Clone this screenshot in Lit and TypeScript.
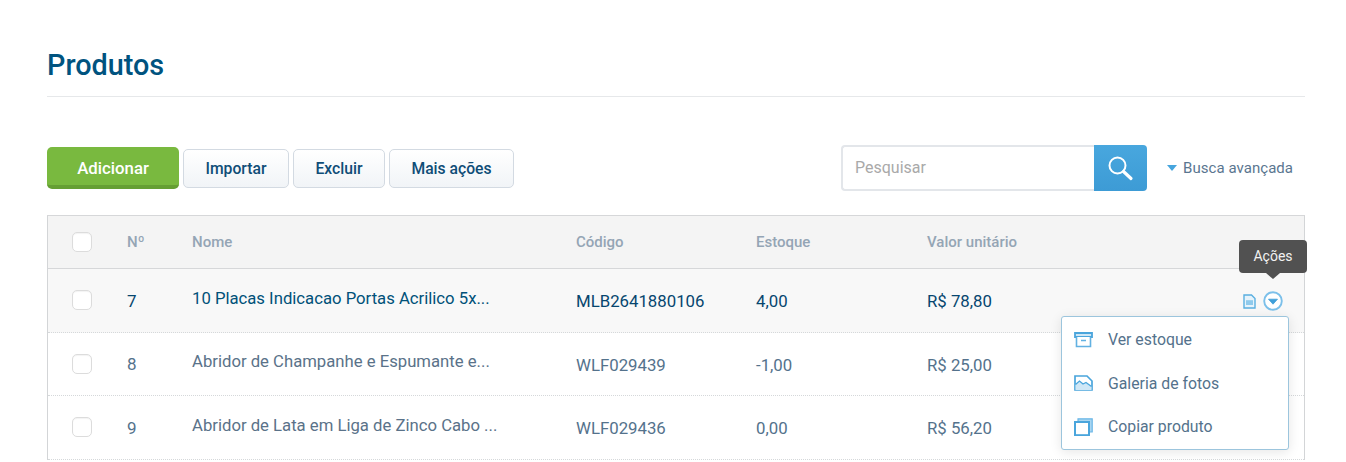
import { LitElement, html, css, svg } from "lit";
import { customElement } from "lit/decorators.js";

const rows = [
  { n: "7", nome: "10 Placas Indicacao Portas Acrilico 5x...", cod: "MLB2641880106", est: "4,00", val: "R$ 78,80", active: true },
  { n: "8", nome: "Abridor de Champanhe e Espumante e...", cod: "WLF029439", est: "-1,00", val: "R$ 25,00", active: false },
  { n: "9", nome: "Abridor de Lata em Liga de Zinco Cabo ...", cod: "WLF029436", est: "0,00", val: "R$ 56,20", active: false },
];

const boxIcon = svg`<svg width="19" height="16" viewBox="0 0 19 16"><path d="M1 1h17v4H1z" fill="#cfe7f6" stroke="#4aa5dc" stroke-width="1.8"/><path d="M2.500 5v9.500h14V5M7 8.500h5" fill="#fff" stroke="#62b1e2" stroke-width="1.600"/></svg>`;
const picIcon = svg`<svg width="19" height="16" viewBox="0 0 19 16"><path d="M1 1h12l5 5v9H1z" fill="#fff" stroke="#4aa5dc" stroke-width="1.700"/><path d="M1.500 9.500l4-3.500 3.500 3 3-1.500 5.500 4v3.500h-16z" fill="#cfe7f6"/><path d="M1.500 9.500l4-3.500 3.500 3 3-1.500 5.500 4" fill="none" stroke="#4aa5dc" stroke-width="1.300"/></svg>`;
const copyIcon = svg`<svg width="19" height="18" viewBox="0 0 19 18"><path d="M4 .8h14.200V14H15V4H4z" fill="#a9d6f1" stroke="#6ab6e6" stroke-width="1.200"/><rect x="1" y="4" width="14" height="13.200" fill="#fff" stroke="#4aa5dc" stroke-width="2"/></svg>`;

@customElement("app-root")
export class AppRoot extends LitElement {
  static styles = css`
    :host { display: block; width: 1346px; height: 462px; overflow: hidden; background: #fff; font-family: Roboto, "Liberation Sans", sans-serif; color: #54728c; }
    .page { padding: 0 41px 0 47px; }
    h1 { margin: 0; height: 97px; box-sizing: border-box; padding-top: 47px; border-bottom: 1px solid #e6e8ea; font-size: 28.8px; line-height: 37px; font-weight: 500; color: #00537f; }
    .toolbar { display: flex; align-items: center; height: 46px; margin-top: 48px; }
    .btn { box-sizing: border-box; height: 39px; margin-right: 4px; display: flex; align-items: center; justify-content: center; border: 1px solid #d3dae2; border-radius: 5px; background: linear-gradient(#fff, #f1f4f7); font-size: 15.7px; font-weight: 500; color: #0f4d77; }
    .add { width: 132px; height: 42px; border: 0; border-bottom: 4px solid #659f33; background: #79b93f; color: #fff; border-radius: 5px; padding-top: 3px; font-size: 16.8px; }
    .imp { width: 106px; } .exc { width: 92px; } .mais { width: 125px; }
    .spacer { flex: 1; }
    .search { display: flex; height: 46px; width: 306px; }
    .field { flex: 1; box-sizing: border-box; border: 2px solid #e3e6ea; border-right: 0; border-radius: 4px 0 0 4px; padding: 0 0 2px 12px; display: flex; align-items: center; font-size: 16px; color: #a9a9a9; }
    .go { width: 53px; border-radius: 0 4px 4px 0; background: linear-gradient(#48a7de, #3d9bd5); display: flex; align-items: center; justify-content: center; }
    .adv { display: flex; align-items: center; width: 158px; height: 46px; box-sizing: border-box; padding: 0 0 0 20px; font-size: 15px; letter-spacing: 0.05px; color: #5a7690; }
    .tri { width: 0; height: 0; border: 5px solid transparent; border-top: 6px solid #46a5dd; border-bottom: 0; margin-right: 6px; }
    .table { position: relative; margin-top: 24px; border: 1px solid #d3d5d7; border-bottom: 0; border-top-color: #d6d7d9; }
    .row, .head { display: grid; grid-template-columns: 79px 65px 384px 180px 171px 1fr; align-items: center; }
    .check { margin-left: 24px; }
    .head { height: 52px; background: #f4f4f4; border-bottom: 1px solid #d6d7d9; font-size: 15px; font-weight: 500; color: #94a5b5; }
    .row { height: 62.500px; border-bottom: 1px dotted #d5d8da; font-size: 16.800px; color: #54728c; }
    .row.active { background: #f8f8f8; color: #06466f; }
    .cell { padding-top: 2px; }
    .nome { font-size: 16.700px; padding-bottom: 4px; color: #5a7289; white-space: nowrap; }
    .row.active .nome { color: #005179; }
    .num { font-size: 17px; padding-top: 1px; }
    .check { box-sizing: border-box; width: 20px; height: 20px; background: #fff; border: 1px solid #dcdcdc; border-radius: 5px; box-shadow: inset 0 1px 1px rgba(0,0,0,0.05); }
    .acts { position: absolute; left: 1195px; top: 75px; display: flex; gap: 7px; align-items: center; }
    .tip { position: absolute; left: 1191px; top: 24px; width: 68px; height: 33px; box-sizing: border-box; padding-bottom: 2px; background: #515151; border-radius: 4px; color: #f2f2f2; font-size: 14px; display: flex; align-items: center; justify-content: center; }
    .tip::after { content: ""; position: absolute; left: 27px; bottom: -6px; border: 7px solid transparent; border-top: 6px solid #515151; border-bottom: 0; }
    .menu { position: absolute; left: 1013px; top: 100px; width: 228px; height: 134px; box-sizing: border-box; background: #fff; border: 1px solid #9cc5dd; border-radius: 3px; box-shadow: 0 2px 12px rgba(0,0,0,0.1); padding: 1px 0 0 12px; }
    .mi { display: flex; align-items: center; height: 43.500px; font-size: 15.800px; color: #54728c; }
    .mi svg { width: 19px; margin-right: 15px; flex: none; }
  `;

  render() {
    return html`
      <div class="page">
        <h1>Produtos</h1>
        <div class="toolbar">
          <div class="btn add">Adicionar</div>
          <div class="btn imp">Importar</div>
          <div class="btn exc">Excluir</div>
          <div class="btn mais">Mais ações</div>
          <div class="spacer"></div>
          <div class="search">
            <div class="field">Pesquisar</div>
            <div class="go">
              <svg width="26" height="26" viewBox="0 0 26 26"><circle cx="9.500" cy="10.500" r="8" fill="none" stroke="#fff" stroke-width="2"/><path d="M15.500 16.500l7.500 7" stroke="#fff" stroke-width="3.200" stroke-linecap="round"/></svg>
            </div>
          </div>
          <div class="adv"><span class="tri"></span>Busca avançada</div>
        </div>
        <div class="table">
          <div class="head">
            <div class="check"></div><div>Nº</div><div>Nome</div><div>Código</div><div>Estoque</div><div>Valor unitário</div>
          </div>
          ${rows.map((r) => html`
            <div class="row ${r.active ? "active" : ""}">
              <div class="check"></div>
              <div class="num">${r.n}</div>
              <div class="nome">${r.nome}</div>
              <div class="cell">${r.cod}</div>
              <div class="cell">${r.est}</div>
              <div class="cell">${r.val}</div>
            </div>`)}
          <div class="acts">
            <svg width="13" height="15" viewBox="0 0 13 15"><path d="M1 1h7.500L12 4.500V14H1z" fill="#e6f3fb" stroke="#5aafe0" stroke-width="1.400"/><path d="M3 6.200h7v4.800H3z" fill="#8fcaec"/></svg>
            <svg width="20" height="20" viewBox="0 0 20 20"><circle cx="10" cy="10" r="8.800" fill="#fff" stroke="#7cc0ea" stroke-width="1.900"/><path d="M5.500 8.200h9l-4.500 5z" fill="#3f9fd9" stroke="#3f9fd9" stroke-width=".8" stroke-linejoin="round"/></svg>
          </div>
          <div class="tip">Ações</div>
          <div class="menu">
            <div class="mi">${boxIcon}Ver estoque</div>
            <div class="mi">${picIcon}Galeria de fotos</div>
            <div class="mi">${copyIcon}Copiar produto</div>
          </div>
        </div>
      </div>
    `;
  }
}
